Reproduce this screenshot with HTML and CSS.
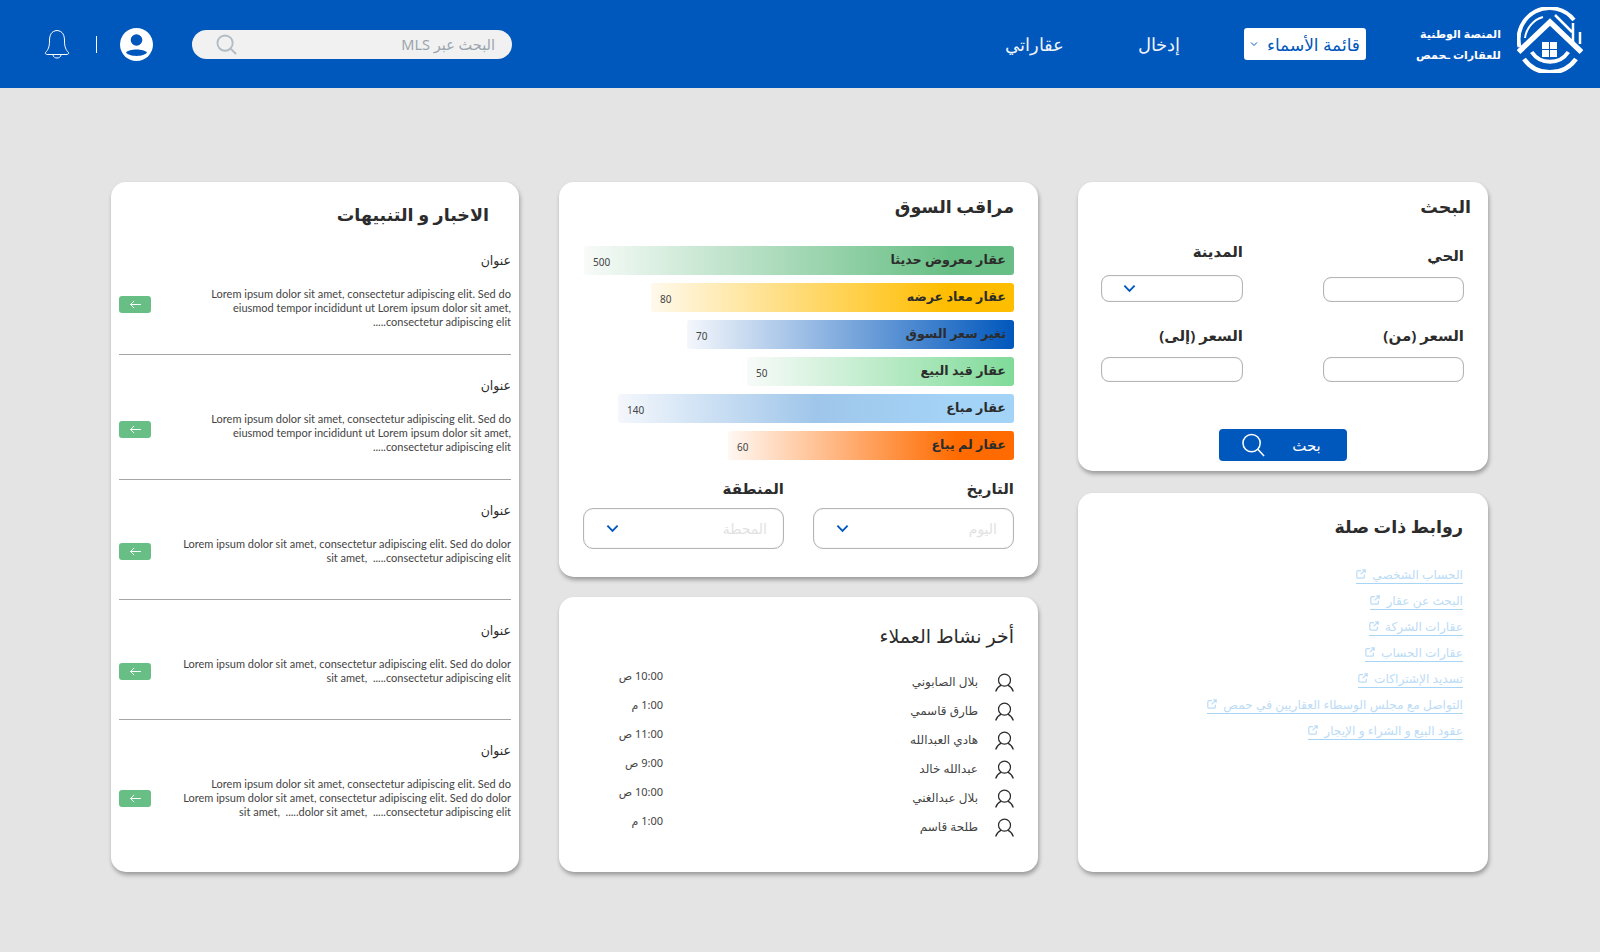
FILE: index.html
```html
<!DOCTYPE html>
<html lang="ar" dir="rtl">
<head>
<meta charset="utf-8">
<title>المنصة الوطنية للعقارات</title>
<link rel="stylesheet" href="styles.css">
</head>
<body>
<header class="topbar">
  <svg class="logo" viewBox="0 0 66 66" fill="none" stroke="#fff">
    <path d="M2.600 40A31 31 0 0 1 57 13" stroke-width="4"/>
    <path d="M7 52A32 32 0 0 0 59 52" stroke-width="4.500"/>
    <path d="M8 31A25 25 0 0 1 26 10" stroke-width="2"/>
    <path d="M38 8L55 25M56 16V35M63 25V37" stroke-width="2.500"/>
    <path d="M1.500 45L33 15L64.500 45" stroke-width="5.500"/>
    <path d="M14.700 45A22 22 0 0 0 51.300 45" stroke-width="4"/>
    <g fill="#fff" stroke="none">
      <rect x="25" y="35" width="7" height="7"/><rect x="33" y="35" width="7" height="7"/>
      <rect x="25" y="43" width="7" height="7"/><rect x="33" y="43" width="7" height="7"/>
    </g>
  </svg>
  <div class="brand"><span>المنصة الوطنية</span><span>للعقارات ـحمص</span></div>
  <div class="names-menu">
    <span>قائمة الأسماء</span>
    <svg class="mini-chevron" viewBox="0 0 8 6" fill="none" stroke="#0057bc" stroke-width="1"><path d="M1 1.500L4 4.500L7 1.500"/></svg>
  </div>
  <a class="nav-link nav-login">إدخال</a>
  <a class="nav-link nav-mine">عقاراتي</a>
  <div class="top-tools">
    <div class="top-search">
      <span>البحث عبر MLS</span>
      <svg class="top-search-icon" viewBox="0 0 22 22" fill="none" stroke="#b2bcc4" stroke-width="2"><circle cx="9.500" cy="9.500" r="8"/><path d="M15 15L21 21"/></svg>
    </div>
    <svg class="avatar" viewBox="0 0 33 33"><circle cx="16.500" cy="16.500" r="16.500" fill="#fff"/><circle cx="16.500" cy="12" r="5.800" fill="#0057bc"/><path d="M6 24.500C9 20.500 24 20.500 27 24.500C24 29 9 29 6 24.500Z" fill="#0057bc"/></svg>
    <span class="tool-sep"></span>
    <svg class="bell" viewBox="0 0 26 30" fill="none" stroke="#fff" stroke-width="1"><path d="M13 1.500C7 2 5.500 6.500 5.500 12C5.500 18 4 21 1.500 23.500C1 25 2 25.500 4 25.500H22C24 25.500 25 25 24.500 23.500C22 21 20.500 18 20.500 12C20.500 6.500 19 2 13 1.500Z"/><path d="M9 26C9.500 30 16.500 30 17 26"/></svg>
  </div>
</header>

<main class="dashboard">
  <div class="column">
    <section class="card search-card">
      <h2 class="card-title">البحث</h2>
      <div class="search-form">
        <div class="field"><label class="field-label">الحي</label><div class="input"></div></div>
        <div class="field field-tall"><label class="field-label">المدينة</label><div class="input">
          <svg class="chevron" viewBox="0 0 14 9" fill="none" stroke="#0057bc" stroke-width="2"><path d="M1.500 1.500L7 7L12.500 1.500"/></svg></div></div>
        <div class="field"><label class="field-label">السعر (من)</label><div class="input"></div></div>
        <div class="field"><label class="field-label">السعر (إلى)</label><div class="input"></div></div>
      </div>
      <button class="search-btn"><span>بحث</span>
        <svg viewBox="0 0 24 24" fill="none" stroke="#fff" stroke-width="1.600"><circle cx="10" cy="10" r="9"/><path d="M16.500 16.500L23 23.500"/></svg>
      </button>
    </section>
    <section class="card links-card">
      <h2 class="card-title">روابط ذات صلة</h2>
      <nav class="links">
        <a class="ext-link">الحساب الشخصي<svg viewBox="0 0 12 12" fill="none" stroke="#bcdcf6" stroke-width="1.500"><path d="M6 2H2.500Q1 2 1 3.500V9.500Q1 11 2.500 11H8.500Q10 11 10 9.500V7"/><path d="M5.500 6.500L11 1M7.500 1H11V4.500"/></svg></a>
        <a class="ext-link">البحث عن عقار<svg viewBox="0 0 12 12" fill="none" stroke="#bcdcf6" stroke-width="1.500"><path d="M6 2H2.500Q1 2 1 3.500V9.500Q1 11 2.500 11H8.500Q10 11 10 9.500V7"/><path d="M5.500 6.500L11 1M7.500 1H11V4.500"/></svg></a>
        <a class="ext-link">عقارات الشركة<svg viewBox="0 0 12 12" fill="none" stroke="#bcdcf6" stroke-width="1.500"><path d="M6 2H2.500Q1 2 1 3.500V9.500Q1 11 2.500 11H8.500Q10 11 10 9.500V7"/><path d="M5.500 6.500L11 1M7.500 1H11V4.500"/></svg></a>
        <a class="ext-link">عقارات الحساب<svg viewBox="0 0 12 12" fill="none" stroke="#bcdcf6" stroke-width="1.500"><path d="M6 2H2.500Q1 2 1 3.500V9.500Q1 11 2.500 11H8.500Q10 11 10 9.500V7"/><path d="M5.500 6.500L11 1M7.500 1H11V4.500"/></svg></a>
        <a class="ext-link">تسديد الإشتراكات<svg viewBox="0 0 12 12" fill="none" stroke="#bcdcf6" stroke-width="1.500"><path d="M6 2H2.500Q1 2 1 3.500V9.500Q1 11 2.500 11H8.500Q10 11 10 9.500V7"/><path d="M5.500 6.500L11 1M7.500 1H11V4.500"/></svg></a>
        <a class="ext-link">التواصل مع مجلس الوسطاء العقاريين في حمص<svg viewBox="0 0 12 12" fill="none" stroke="#bcdcf6" stroke-width="1.500"><path d="M6 2H2.500Q1 2 1 3.500V9.500Q1 11 2.500 11H8.500Q10 11 10 9.500V7"/><path d="M5.500 6.500L11 1M7.500 1H11V4.500"/></svg></a>
        <a class="ext-link">عقود البيع و الشراء و الإيجار<svg viewBox="0 0 12 12" fill="none" stroke="#bcdcf6" stroke-width="1.500"><path d="M6 2H2.500Q1 2 1 3.500V9.500Q1 11 2.500 11H8.500Q10 11 10 9.500V7"/><path d="M5.500 6.500L11 1M7.500 1H11V4.500"/></svg></a>
      </nav>
    </section>
  </div>

  <div class="column">
    <section class="card market-card">
      <h2 class="card-title">مراقب السوق</h2>
      <div class="bars">
        <div class="bar bar-green" style="width:430px"><b>عقار معروض حديثا</b><span>500</span></div>
        <div class="bar bar-yellow" style="width:363px"><b>عقار معاد عرضه</b><span>80</span></div>
        <div class="bar bar-blue" style="width:327px"><b>تغير سعر السوق</b><span>70</span></div>
        <div class="bar bar-mint" style="width:267px"><b>عقار قيد البيع</b><span>50</span></div>
        <div class="bar bar-sky" style="width:396px"><b>عقار مباع</b><span>140</span></div>
        <div class="bar bar-orange" style="width:286px"><b>عقار لم يباع</b><span>60</span></div>
      </div>
      <div class="filters">
        <div><div class="filter-label">التاريخ</div><div class="select"><span>اليوم</span>
          <svg class="chevron" viewBox="0 0 14 9" fill="none" stroke="#0057bc" stroke-width="2"><path d="M1.500 1.500L7 7L12.500 1.500"/></svg></div></div>
        <div><div class="filter-label">المنطقة</div><div class="select"><span>المحطة</span>
          <svg class="chevron" viewBox="0 0 14 9" fill="none" stroke="#0057bc" stroke-width="2"><path d="M1.500 1.500L7 7L12.500 1.500"/></svg></div></div>
      </div>
    </section>
    <section class="card activity-card">
      <h2 class="card-title">أخر نشاط العملاء</h2>
      <ul class="activity">
        <li><svg viewBox="0 0 20 20" fill="none" stroke="#2b2b2b" stroke-width="1.300"><circle cx="10" cy="7.500" r="6.300"/><path d="M0.700 19.500C2 15.500 5 13.500 6.500 12.800M19.300 19.500C18 15.500 15 13.500 13.500 12.800"/></svg><span class="person">بلال الصابوني</span><time>10:00 ص</time></li>
        <li><svg viewBox="0 0 20 20" fill="none" stroke="#2b2b2b" stroke-width="1.300"><circle cx="10" cy="7.500" r="6.300"/><path d="M0.700 19.500C2 15.500 5 13.500 6.500 12.800M19.300 19.500C18 15.500 15 13.500 13.500 12.800"/></svg><span class="person">طارق قاسمي</span><time>1:00 م</time></li>
        <li><svg viewBox="0 0 20 20" fill="none" stroke="#2b2b2b" stroke-width="1.300"><circle cx="10" cy="7.500" r="6.300"/><path d="M0.700 19.500C2 15.500 5 13.500 6.500 12.800M19.300 19.500C18 15.500 15 13.500 13.500 12.800"/></svg><span class="person">هادي العبدالله</span><time>11:00 ص</time></li>
        <li><svg viewBox="0 0 20 20" fill="none" stroke="#2b2b2b" stroke-width="1.300"><circle cx="10" cy="7.500" r="6.300"/><path d="M0.700 19.500C2 15.500 5 13.500 6.500 12.800M19.300 19.500C18 15.500 15 13.500 13.500 12.800"/></svg><span class="person">عبدالله خالد</span><time>9:00 ص</time></li>
        <li><svg viewBox="0 0 20 20" fill="none" stroke="#2b2b2b" stroke-width="1.300"><circle cx="10" cy="7.500" r="6.300"/><path d="M0.700 19.500C2 15.500 5 13.500 6.500 12.800M19.300 19.500C18 15.500 15 13.500 13.500 12.800"/></svg><span class="person">بلال عبدالغني</span><time>10:00 ص</time></li>
        <li><svg viewBox="0 0 20 20" fill="none" stroke="#2b2b2b" stroke-width="1.300"><circle cx="10" cy="7.500" r="6.300"/><path d="M0.700 19.500C2 15.500 5 13.500 6.500 12.800M19.300 19.500C18 15.500 15 13.500 13.500 12.800"/></svg><span class="person">طلحة قاسم</span><time>1:00 م</time></li>
      </ul>
    </section>
  </div>

  <section class="card news-card">
    <h2 class="card-title news-title">الاخبار و التنبيهات</h2>
    <article class="news-item">
      <h3>عنوان</h3>
      <div class="news-body">
        <p>Lorem ipsum dolor sit amet, consectetur adipiscing elit. Sed do<br>eiusmod tempor incididunt ut Lorem ipsum dolor sit amet,&lrm;<br>consectetur adipiscing elit.....</p>
        <a class="go go-up"><svg viewBox="0 0 14 10" fill="none" stroke="#fff" stroke-width="1.100"><path d="M13 5H1.500M5.500 1L1.500 5L5.500 9"/></svg></a>
      </div>
    </article>
    <article class="news-item">
      <h3>عنوان</h3>
      <div class="news-body">
        <p>Lorem ipsum dolor sit amet, consectetur adipiscing elit. Sed do<br>eiusmod tempor incididunt ut Lorem ipsum dolor sit amet,&lrm;<br>consectetur adipiscing elit.....</p>
        <a class="go go-up"><svg viewBox="0 0 14 10" fill="none" stroke="#fff" stroke-width="1.100"><path d="M13 5H1.500M5.500 1L1.500 5L5.500 9"/></svg></a>
      </div>
    </article>
    <article class="news-item">
      <h3>عنوان</h3>
      <div class="news-body news-short">
        <p>Lorem ipsum dolor sit amet, consectetur adipiscing elit. Sed do dolor<br>consectetur adipiscing elit&rlm;.....&rlm;&nbsp;&nbsp;&rlm;sit amet,&lrm;</p>
        <a class="go"><svg viewBox="0 0 14 10" fill="none" stroke="#fff" stroke-width="1.100"><path d="M13 5H1.500M5.500 1L1.500 5L5.500 9"/></svg></a>
      </div>
    </article>
    <article class="news-item">
      <h3>عنوان</h3>
      <div class="news-body news-short">
        <p>Lorem ipsum dolor sit amet, consectetur adipiscing elit. Sed do dolor<br>consectetur adipiscing elit&rlm;.....&rlm;&nbsp;&nbsp;&rlm;sit amet,&lrm;</p>
        <a class="go"><svg viewBox="0 0 14 10" fill="none" stroke="#fff" stroke-width="1.100"><path d="M13 5H1.500M5.500 1L1.500 5L5.500 9"/></svg></a>
      </div>
    </article>
    <article class="news-item news-last">
      <h3>عنوان</h3>
      <div class="news-body">
        <p>Lorem ipsum dolor sit amet, consectetur adipiscing elit. Sed do<br>Lorem ipsum dolor sit amet, consectetur adipiscing elit. Sed do dolor<br>consectetur adipiscing elit&rlm;.....&rlm;&nbsp;&nbsp;&rlm;dolor sit amet,&lrm;&rlm;.....&rlm;&nbsp;&nbsp;&rlm;sit amet,&lrm;</p>
        <a class="go"><svg viewBox="0 0 14 10" fill="none" stroke="#fff" stroke-width="1.100"><path d="M13 5H1.500M5.500 1L1.500 5L5.500 9"/></svg></a>
      </div>
    </article>
  </section>
</main>
</body>
</html>
```
FILE: styles.css
```css
* { box-sizing: border-box; }
html, body { margin: 0; height: 100%; }
body {
  background: #e4e4e4;
  color: #2c2c2c;
  font-family: "Noto Sans", "DejaVu Sans", sans-serif;
  overflow: hidden;
}
h2, h3, p, ul { margin: 0; padding: 0; }

/* top bar */
.topbar {
  height: 88px;
  background: #0057bc;
  display: flex;
  align-items: center;
  padding: 0 17px 0 44px;
  color: #fff;
}
.logo { width: 66px; height: 66px; flex: none; margin-top: -8px; }
.brand {
  width: 79px;
  margin-right: 16px;
  display: flex;
  flex-direction: column;
  gap: 7px;
  font-size: 11px;
  line-height: 14px;
  font-weight: 700;
  white-space: nowrap;
}
.names-menu {
  width: 122px;
  height: 32px;
  margin-right: 56px;
  background: #fff;
  border-radius: 3px;
  color: #0057bc;
  font-size: 17px;
  display: flex;
  align-items: center;
  justify-content: space-between;
  padding: 0 6px;
  white-space: nowrap;
}
.mini-chevron { width: 8px; height: 6px; }
.nav-link { font-size: 18px; color: #f0f4fa; font-weight: 300; white-space: nowrap; }
.nav-login { margin-right: 64px; }
.nav-mine { margin-right: 74px; }
.top-tools { margin-right: auto; display: flex; align-items: center; }
.top-search {
  width: 320px;
  height: 29px;
  border-radius: 15px;
  background: #f1f1f1;
  display: flex;
  align-items: center;
  justify-content: space-between;
  padding: 0 17px 0 24px;
  font-size: 14.500px;
  color: #9aa5ad;
}
.top-search-icon { width: 21px; height: 21px; }
.avatar { width: 33px; height: 33px; margin-right: 39px; }
.tool-sep { width: 1px; height: 17px; background: #fff; margin: 0 23px; }
.bell { width: 26px; height: 30px; margin-right: 3px; }

/* layout */
.dashboard {
  display: grid;
  grid-template-columns: 410px 479px 408px;
  column-gap: 40px;
  height: 690px;
  margin: 94px 112px 0 0;
  width: 1377px;
}
.column { display: flex; flex-direction: column; height: 100%; }
.card {
  background: #fff;
  border-radius: 15px;
  box-shadow: 1px 3px 4px rgba(0, 0, 0, .32);
}
.card-title { font-size: 17.500px; line-height: 22px; font-weight: 700; color: #2c2c2c; }

/* search */
.search-card { height: 289px; padding: 13px 17px 0 0; }
.search-form {
  display: grid;
  grid-template-columns: 141px 142px;
  column-gap: 80px;
  margin: 0 7px 0 0;
  align-items: end;
}
.search-card .card-title { margin-bottom: 24px; }
.field-label { display: block; font-size: 15px; line-height: 20px; font-weight: 700; margin-bottom: 12px; }
.field-tall .field-label { margin-bottom: 14px; }
.input {
  height: 25px;
  border: 1px solid #b5b5b5;
  box-shadow: inset 0 0 1px #bbb;
  border-radius: 8px;
  display: flex;
  align-items: center;
  padding-left: 21px;
  justify-content: flex-end;
}
.field-tall .input { height: 27px; }
.search-form .field:nth-child(n+3) { margin-top: 23px; }
.chevron { width: 13px; height: 9px; }
.search-btn {
  display: flex;
  align-items: center;
  justify-content: center;
  gap: 27px;
  width: 128px;
  height: 32px;
  margin: 47px 124px 0 0;
  padding: 0 3px 0 0;
  background: #0057bc;
  color: #fff;
  border: 0;
  border-radius: 4px;
  font: inherit;
  font-size: 15px;
}
.search-btn svg { width: 23px; height: 24px; }

/* links */
.links-card { flex: 1; margin-top: 22px; padding: 22px 25px 0 0; }
.links { display: flex; flex-direction: column; align-items: flex-start; gap: 7px; margin-top: 28px; }
.ext-link {
  display: flex;
  align-items: center;
  gap: 6px;
  height: 19px;
  font-size: 12.200px;
  color: #bcdcf6;
  border-bottom: 1px solid #a8d4f5;
  white-space: nowrap;
}
.ext-link svg { width: 10px; height: 10px; margin-bottom: 1px; }

/* market */
.market-card { height: 395px; padding: 13px 24px 0 24px; }
.bars { display: flex; flex-direction: column; align-items: flex-start; gap: 8px; margin-top: 29px; }
.bar {
  height: 29px;
  border-radius: 3px;
  display: flex;
  align-items: center;
  justify-content: space-between;
  padding: 0 8px 0 9px;
  white-space: nowrap;
}
.bar b { font-size: 12.700px; line-height: 20px; font-weight: 700; margin-top: -3px; color: #2c2c2c; }
.bar span { font-size: 10px; color: #444; margin-top: 2px; }
.bar-green { background: linear-gradient(to left, #68bf85 15%, #f8fbf9); }
.bar-yellow { background: linear-gradient(to left, #ffbd00 18%, #fff9ec); }
.bar-blue { background: linear-gradient(to left, #0057bc, #f4f7fc); }
.bar-mint { background: linear-gradient(to left, #7fdb98, #f8fbf9); }
.bar-sky { background: linear-gradient(to left, #a3d3f7 15%, #9fc6ea 50%, #f4f7fc); }
.bar-orange { background: linear-gradient(to left, #ff6b00 20%, #fff8f3); }
.filters { display: grid; grid-template-columns: 201px 201px; column-gap: 29px; margin-top: 18px; }
.filter-label { font-size: 15px; line-height: 20px; font-weight: 700; margin-bottom: 10px; }
.select {
  height: 41px;
  border: 1px solid #b5b5b5;
  box-shadow: inset 0 0 1px #bbb;
  border-radius: 10px;
  display: flex;
  align-items: center;
  justify-content: space-between;
  padding: 0 16px 0 22px;
  font-size: 14px;
  color: #e2e2e2;
}

/* activity */
.activity-card { flex: 1; margin-top: 20px; padding: 28px 24px 0 24px; }
.activity-card .card-title { font-weight: 400; font-size: 19px; }
.activity { list-style: none; margin-top: 23px; }
.activity li { height: 29px; display: flex; align-items: flex-start; }
.activity svg { width: 19px; height: 19px; margin-top: 3px; flex: none; }
.person { font-size: 12px; line-height: 14px; color: #444; margin: 5px 17px 0 0; white-space: nowrap; }
.activity time { margin-right: auto; margin-top: -1px; width: 80px; font-size: 11px; line-height: 14px; color: #444; text-align: right; white-space: nowrap; }

/* news */
.news-card { height: 100%; padding: 21px 8px 0; }
.news-title { padding-right: 22px; margin-bottom: 5px; }
.news-item { padding-top: 22px; border-bottom: 1px solid #a5a5a5; }
.news-last { border-bottom: 0; }
.news-item h3 { font-size: 12.500px; line-height: 18px; font-weight: 400; color: #2c2c2c; }
.news-body {
  display: flex;
  align-items: center;
  justify-content: space-between;
  margin: 17px 0 25px;
}
.news-short { margin-bottom: 34px; }
.news-body p { font-family: "Lato", "Noto Sans", sans-serif; font-size: 11px; line-height: 14px; color: #444; white-space: nowrap; }
.go {
  width: 32px;
  height: 17px;
  background: #68bf85;
  border-radius: 3px;
  display: flex;
  align-items: center;
  justify-content: center;
  flex: none;
}
.go-up { margin-bottom: 7px; }
.go svg { width: 13px; height: 9px; }
```
